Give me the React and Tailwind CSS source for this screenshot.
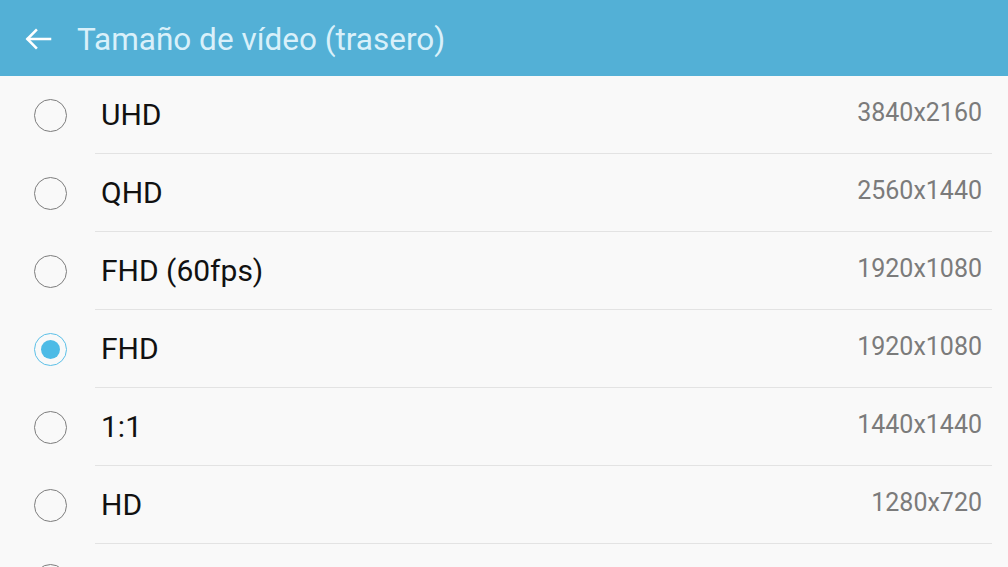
const options = [
  { label: "UHD", size: "3840x2160" },
  { label: "QHD", size: "2560x1440" },
  { label: "FHD (60fps)", size: "1920x1080" },
  { label: "FHD", size: "1920x1080", selected: true },
  { label: "1:1", size: "1440x1440" },
  { label: "HD", size: "1280x720" },
];

function Radio({ selected }) {
  if (selected) {
    return (
      <div className="w-[33px] h-[33px] rounded-full border-[1.5px] border-[#5cc0e8] flex items-center justify-center">
        <div className="w-[19px] h-[19px] rounded-full bg-[#4dbbe6]" />
      </div>
    );
  }
  return <div className="w-[33px] h-[33px] rounded-full border-[1.5px] border-[#7d7d7d]" />;
}

export default function App() {
  return (
    <div
      className="w-[1008px] h-[567px] overflow-hidden bg-[#f9f9f9] flex flex-col"
      style={{ fontFamily: "Roboto, 'Noto Sans', sans-serif" }}
    >
      {/* Header */}
      <header className="h-[76px] shrink-0 bg-[#53b0d6] flex items-center">
        <div className="w-[77px] flex items-center pl-[22px] pt-[2px]">
          <svg width="32" height="32" viewBox="0 0 24 24" fill="none" stroke="#ffffff" strokeWidth="1.9" strokeLinecap="square">
            <path d="M21 12H4.5" />
            <path d="M10.5 5.5L4 12L10.5 18.5" />
          </svg>
        </div>
        <h1 className="text-[31.5px] text-[#d9f0fa] pt-[3px]">Tamaño de vídeo (trasero)</h1>
      </header>

      {/* Options */}
      <ul className="flex flex-col">
        {options.map((o) => (
          <li key={o.label} className="h-[78px] shrink-0 flex">
            <div className="w-[95px] shrink-0 flex items-center pl-[34px]">
              <Radio selected={o.selected} />
            </div>
            <div className="flex-1 mr-[16px] border-b border-[#e3e3e3] flex items-center justify-between pl-[6px] pr-[10px]">
              <span className="text-[30px] text-[#111111]">{o.label}</span>
              <span className="text-[25px] text-[#7b7b7b] mb-[4px]">{o.size}</span>
            </div>
          </li>
        ))}
        {/* next row, only its radio peeks in at the bottom edge */}
        <li className="h-[78px] shrink-0 flex">
          <div className="w-[95px] shrink-0 flex items-center pl-[34px] pb-[6px]">
            <Radio />
          </div>
        </li>
      </ul>
    </div>
  );
}
